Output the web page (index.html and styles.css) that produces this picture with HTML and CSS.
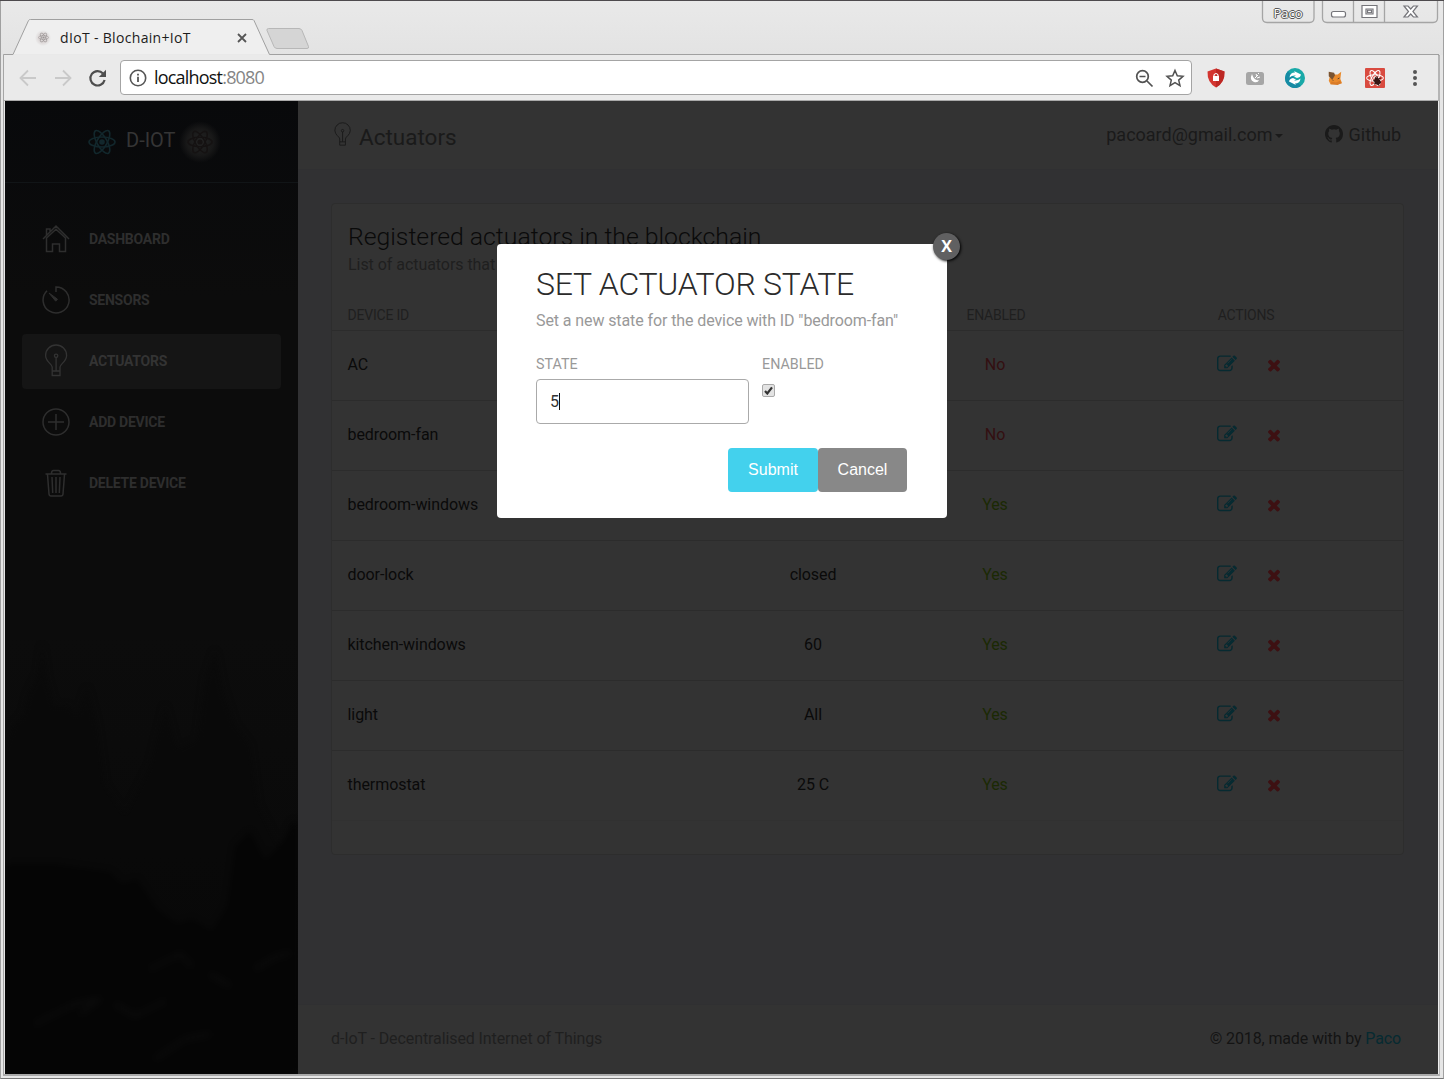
FILE: index.html
```html
<!DOCTYPE html>
<html lang="en">
<head>
<meta charset="utf-8">
<title>dIoT - Blochain+IoT</title>
<link rel="stylesheet" href="styles.css">
</head>
<body>
<svg width="0" height="0" class="defs">
  <symbol id="atom" viewBox="0 0 28 28"><g fill="none" stroke="currentColor" stroke-width="1.6"><ellipse cx="14" cy="14" rx="13" ry="5"/><ellipse cx="14" cy="14" rx="13" ry="5" transform="rotate(60 14 14)"/><ellipse cx="14" cy="14" rx="13" ry="5" transform="rotate(120 14 14)"/></g><circle cx="14" cy="14" r="2.8" fill="currentColor"/></symbol>
  <symbol id="bulb" viewBox="0 0 28 34"><g fill="none" stroke="currentColor" stroke-width="1.3"><path d="M10.2 27v-4c0-3-6.600-5.300-6.600-11.500a10.500 10.500 0 0 1 21 0c0 6.200-6.600 8.500-6.600 11.500v4zM10.200 27v4.500h7.800V27M14.100 13.500V27"/><circle cx="14.100" cy="11.800" r="1.700"/></g></symbol>
  <symbol id="edit" viewBox="0 0 1792 1792"><path fill="currentColor" d="M888 1184l116-116-152-152-116 116v56h96v96h56zm440-720q-16-16-33 1l-350 350q-17 17-1 33t33-1l350-350q17-17 1-33zm80 594v190q0 119-84.500 203.500t-203.500 84.500h-832q-119 0-203.500-84.500t-84.500-203.500v-832q0-119 84.500-203.500t203.500-84.500h832q63 0 117 25 15 7 18 23 3 17-9 29l-49 49q-14 14-32 8-23-6-45-6h-832q-66 0-113 47t-47 113v832q0 66 47 113t113 47h832q66 0 113-47t47-113v-126q0-13 9-22l64-64q15-15 35-7t20 29zm-96-738l288 288-672 672h-288v-288zm444 132l-92 92-288-288 92-92q28-28 68-28t68 28l152 152q28 28 28 68t-28 68z"/></symbol>
  <symbol id="times" viewBox="0 0 1792 1792"><path fill="currentColor" d="M1490 1322q0 40-28 68l-136 136q-28 28-68 28t-68-28l-294-294-294 294q-28 28-68 28t-68-28l-136-136q-28-28-28-68t28-68l294-294-294-294q-28-28-28-68t28-68l136-136q28-28 68-28t68 28l294 294 294-294q28-28 68-28t68 28l136 136q28 28 28 68t-28 68l-294 294 294 294q28 28 28 68z"/></symbol>
</svg>
<div class="window">
  <div class="titlebar">
    <svg class="tab-shape" width="1444" height="55" viewBox="0 0 1444 55">
      <path d="M13 54.500 28.500 20.500Q29 19.500 30.500 19.500H252Q253.500 19.500 254 20.500L269 54.500" fill="#efefef"/>
      <path d="M3.500 55v-.5H13L28.500 20.500Q29 19.500 30.500 19.500H252Q253.500 19.500 254 20.500L269.500 54.500H1439" fill="none" stroke="#a0a0a0"/>
      <path d="M268.500 28.500H299q2 0 3 2l6.500 16q.5 2-1.500 2H277q-2 0-3-2l-7-16q-.5-2 1.500-2z" fill="#d5d5d5" stroke="#b7b7b7"/>
      <path d="M1262.500 1v17q0 4.500 4.500 4.500h42.500q4.500 0 4.500-4.500V1M1322.500 1v17q0 4.500 4.500 4.500h106q4.500 0 4.500-4.500V1M1353.500 1v21M1384.500 1v21" fill="none" stroke="#a5a5a5" stroke-width="1.300"/>
      <g fill="#fff" stroke="#75757a" stroke-width="1.200"><rect x="1331.500" y="11.500" width="14" height="5.500" rx="2"/><path d="M1362 5.500h15v12h-15zM1366 9h7v5h-7z"/><rect x="1367.500" y="10.200" width="4" height="2.500"/><path d="M1404 6h4l2.700 3 2.700-3h4l-4.500 5.500 4.500 5.500h-4l-2.700-3-2.700 3h-4l4.500-5.500z"/></g>
    </svg>
    <div class="tab"><span class="favicon"><svg width="11" height="11"><use href="#atom"/></svg></span><span class="tab-title">dIoT - Blochain+IoT</span><svg width="10" height="10" viewBox="0 0 10 10"><path d="m1 1 8 8M9 1 1 9" stroke="#555" stroke-width="1.800"/></svg></div>
    <span class="profile">Paco</span>
  </div>
  <div class="toolbar">
    <svg class="nav-icons" width="90" height="20" viewBox="0 0 90 20"><g fill="none" stroke="#c9c9c9" stroke-width="1.800"><path d="M17 10H2M9 2.500 1.500 10 9 17.500M36 10h15M44 2.500l7.500 7.500-7.500 7.500"/></g><path d="M84 5.500A7.200 7.200 0 1 0 85.600 12" fill="none" stroke="#4e4e4e" stroke-width="2.200"/><path d="M87 1.800V9h-7.200z" fill="#4e4e4e"/></svg>
    <div class="address">
      <svg width="18" height="18" viewBox="0 0 18 18"><circle cx="9" cy="9" r="7.700" fill="none" stroke="#555" stroke-width="1.600"/><path d="M9 7.800v5.200M9 4.700v1.800" stroke="#555" stroke-width="1.800"/></svg>
      <span class="url">localhost<span>:8080</span></span>
      <svg width="50" height="20" viewBox="0 0 50 20"><g fill="none" stroke="#515151" stroke-width="1.700"><circle cx="7.500" cy="8.500" r="5.800"/><path d="m12 13 5.500 5.500M4.500 8.500h6"/><path d="m40 2.500 2.300 5.300 5.700.5-4.300 3.800 1.300 5.600-5-3-5 3 1.300-5.600L32 8.300l5.700-.5z" stroke-width="1.500"/></g></svg>
    </div>
    <div class="extensions">
      <svg width="18" height="20" viewBox="0 0 18 20"><path d="m9 .5 8.500 3q.5 11-8.500 16Q0 14.500.5 3.500z" fill="#d33530"/><path d="m9 .5 8.500 3q.5 11-8.500 16z" fill="#bd2824"/><rect x="6" y="8" width="6" height="5" fill="#fff"/><path d="M7 8V7q2-3 4 0v1" fill="none" stroke="#fff" stroke-width="1.200"/></svg>
      <svg width="20" height="20" viewBox="0 0 20 20"><rect x="1" y="4" width="18" height="13" rx="2.500" fill="#a6a6a6"/><path d="M7 6q-3 6 2 8 4 1 5-2-5 1-7-6z" fill="#fff"/><path d="m10 10 3-3M11 6l1 2M12 10l3-1M13 6l1-1" stroke="#fff" fill="none"/></svg>
      <svg width="20" height="20" viewBox="0 0 20 20"><circle cx="10" cy="10" r="10" fill="#19a9a8"/><path d="M0 10a10 10 0 0 0 16 8L3 3Q0 6 0 10z" fill="#168ba4"/><path d="M4.500 9.500Q5 4.500 10 4.500l-1-1.500 7 3.500q-.5 3-4 3.500l-3-1.500 2-1Q7 7 4.500 9.500zM15.500 10.500q-.5 5-5.500 5l1 1.500-7-3.500q.5-3 4-3.500l3 1.500-2 1q4 .5 6.500-2z" fill="#fff"/></svg>
      <svg width="16" height="16" viewBox="0 0 18 18"><path d="m2 3 6 2h4l4-3-1 8 2 5-5 1H4l-2-4 1-4z" fill="#e98a2c"/><path d="m2 2 6 1 1 3-3 5-4-4z" fill="#795331"/><path d="m5 13 5 1 5-2 1 3-4 2-8-1z" fill="#d97b27"/><path d="m12 10 2-1M7 12l-1-1" stroke="#4b3b2e"/></svg>
      <svg width="20" height="20" viewBox="0 0 20 20"><rect width="20" height="20" rx="1" fill="#d94b40"/><g color="#fff"><use href="#atom" x="1" y="1" width="18" height="18"/></g><path d="m10 9 3 1 2 2 1 3-3 2-3-1-1-3z" fill="#351613"/><path d="m8 13 8-3M9 16l7-2M12 8l2 10" stroke="#351613"/></svg>
      <svg width="6" height="18" viewBox="0 0 6 18"><g fill="#555"><circle cx="3" cy="3" r="2"/><circle cx="3" cy="9" r="2"/><circle cx="3" cy="15" r="2"/></g></svg>
    </div>
  </div>
  <div class="app">
    <aside class="sidebar">
      <svg class="forest" width="293" height="450" viewBox="0 0 293 450" preserveAspectRatio="none">
        <path class="far" d="M0 125 8 102l10-12 5-20 10-20 4-30 5 35 8 28 12-2 10 10 10-28 10 38 8 60 20 30 25-50 15-60 12 45 20-10 8-60 10-30 8 40 12 35 15 20 8 60 20 40v240H0z"/>
        <path class="near" d="M0 240l50 0 35 5 20 3 12 12 15-5 20 30 20 15 15-5 20 12 15-25 8-60 15-15 15 30 18-20 10-20 25 15v258H0z"/>
        <path class="rocks" d="m30 400 40-20 25-5-20 15M145 345l30-15 12 12M205 350l20 12M250 345l20-12 15-4M110 380l20 12 30-15M150 435l30-20 25-5"/>
      </svg>
      <div class="brand"><svg class="logo" width="28" height="28"><use href="#atom"/></svg><span>D-IOT</span><i class="glow"><svg width="26" height="26"><use href="#atom"/></svg></i></div>
      <nav>
        <a><svg width="28" height="34" viewBox="0 0 28 34"><path d="M1 17 14 4l13 13M4.500 16v13.500h6V22h7v7.500h6V16L14 7.200zM4.500 13V7H8v3" fill="none" stroke="currentColor" stroke-width="1.500"/></svg>DASHBOARD</a>
        <a><svg width="28" height="34" viewBox="0 0 28 34"><path d="M14 9V4A13 13 0 1 1 5 7.700" fill="none" stroke="currentColor" stroke-width="1.500"/><path d="m7 10 8.500 6.200-1.800 2z" fill="currentColor" stroke="currentColor"/></svg>SENSORS</a>
        <a class="active"><svg width="28" height="34"><use href="#bulb"/></svg>ACTUATORS</a>
        <a><svg width="28" height="34" viewBox="0 0 28 34"><g fill="none" stroke="currentColor" stroke-width="1.500"><circle cx="14" cy="17" r="13"/><path d="M6 17h16M14 9v16"/></g></svg>ADD DEVICE</a>
        <a><svg width="28" height="34" viewBox="0 0 28 34"><path d="M3.500 8h21M5.500 8.500l1.500 19.500q.2 2 2 2h10q1.800 0 2-2l1.500-19.500M9.500 7.500q0-3 2-3h5q2 0 2 3M10 11l.7 16M14 11v16M18 11l-.7 16" fill="none" stroke="currentColor" stroke-width="1.500"/></svg>DELETE DEVICE</a>
      </nav>
    </aside>
    <main>
      <header>
        <svg width="21" height="25" viewBox="0 0 28 34"><use href="#bulb"/></svg><h1>Actuators</h1>
        <span class="account">pacoard@gmail.com</span><i class="caret"></i>
        <svg class="github" width="18" height="18" viewBox="0 0 16 16"><path fill="currentColor" d="M8 0C3.580 0 0 3.580 0 8c0 3.540 2.290 6.530 5.470 7.590.4.070.55-.17.55-.38 0-.19-.01-.82-.01-1.490-2.010.37-2.530-.49-2.690-.94-.09-.23-.48-.94-.82-1.130-.28-.15-.68-.52-.01-.53.63-.01 1.080.58 1.230.82.72 1.210 1.870.87 2.330.66.07-.52.28-.87.51-1.070-1.780-.2-3.640-.89-3.640-3.950 0-.87.31-1.590.82-2.150-.08-.2-.36-1.020.08-2.120 0 0 .67-.21 2.200.82a7.600 7.600 0 0 1 4 0c1.530-1.040 2.200-.82 2.200-.82.44 1.100.16 1.920.08 2.120.51.56.82 1.270.82 2.150 0 3.070-1.870 3.750-3.650 3.950.29.25.54.73.54 1.480 0 1.070-.01 1.930-.01 2.200 0 .21.15.46.55.38A8 8 0 0 0 16 8c0-4.420-3.580-8-8-8z"/></svg><span class="gh">Github</span>
      </header>
      <section class="content">
        <div class="card">
          <h2>Registered actuators in the blockchain</h2>
          <p>List of actuators that</p>
          <div class="row head"><span>DEVICE ID</span><span></span><span>ENABLED</span><span>ACTIONS</span></div>
          <div class="row"><span>AC</span><span></span><span class="no">No</span><span class="actions"><svg class="edit"><use href="#edit"/></svg><svg class="del"><use href="#times"/></svg></span></div>
          <div class="row"><span>bedroom-fan</span><span></span><span class="no">No</span><span class="actions"><svg class="edit"><use href="#edit"/></svg><svg class="del"><use href="#times"/></svg></span></div>
          <div class="row"><span>bedroom-windows</span><span></span><span class="yes">Yes</span><span class="actions"><svg class="edit"><use href="#edit"/></svg><svg class="del"><use href="#times"/></svg></span></div>
          <div class="row"><span>door-lock</span><span>closed</span><span class="yes">Yes</span><span class="actions"><svg class="edit"><use href="#edit"/></svg><svg class="del"><use href="#times"/></svg></span></div>
          <div class="row"><span>kitchen-windows</span><span>60</span><span class="yes">Yes</span><span class="actions"><svg class="edit"><use href="#edit"/></svg><svg class="del"><use href="#times"/></svg></span></div>
          <div class="row"><span>light</span><span>All</span><span class="yes">Yes</span><span class="actions"><svg class="edit"><use href="#edit"/></svg><svg class="del"><use href="#times"/></svg></span></div>
          <div class="row"><span>thermostat</span><span>25 C</span><span class="yes">Yes</span><span class="actions"><svg class="edit"><use href="#edit"/></svg><svg class="del"><use href="#times"/></svg></span></div>
        </div>
      </section>
      <footer><span>d-IoT - Decentralised Internet of Things</span><span class="copy">© 2018, made with by <b>Paco</b></span></footer>
    </main>
  </div>
  <div class="modal">
    <span class="close">X</span>
    <h3>SET ACTUATOR STATE</h3>
    <p>Set a new state for the device with ID "bedroom-fan"</p>
    <div class="fields">
      <div class="field"><label>STATE</label><div class="input">5<i></i></div></div>
      <div class="field narrow"><label>ENABLED</label><div class="check"><svg width="9" height="9" viewBox="0 0 9 9"><path d="m1 5 2.300 2.500L8 1.300" fill="none" stroke="#333" stroke-width="2.200"/></svg></div></div>
    </div>
    <div class="buttons"><span class="submit">Submit</span><span class="cancel">Cancel</span></div>
  </div>
</div>
</body>
</html>
```
FILE: styles.css
```css
* { box-sizing: border-box; }
body { margin: 0; font-family: Roboto, sans-serif; font-size: 16px; overflow: hidden; }
h1, h2, h3, p { margin: 0; font-weight: 400; white-space: nowrap; }
svg { display: block; flex: none; }
.defs { position: absolute; }
.window { position: relative; width: 1444px; height: 1079px; background: #e6e6e6; display: flex; flex-direction: column; border-top: 1px solid #4d4a4d; }
.window::before { content: ""; position: absolute; inset: 54px 4px 3px 3px; border: 1px solid #a5a5a5; border-right: 2px solid #b5b5b5; border-bottom: 2px solid #aaa; pointer-events: none; }
.window::after { content: ""; position: absolute; inset: 0; border: 1px solid #a0a0a0; border-top: 0; border-bottom-color: #777; pointer-events: none; }
.titlebar { position: relative; height: 54px; background: linear-gradient(#e9e9e9, #e3e3e3); display: flex; justify-content: space-between; }
.tab-shape { position: absolute; left: 0; top: -1px; }
.tab { position: relative; display: flex; align-items: center; margin: 19px 0 0 35px; height: 35px; width: 212px; }
.favicon { width: 16px; height: 16px; border-radius: 50%; background: radial-gradient(circle, #ddd8d8 40%, #efefef 72%); color: #9a9494; display: grid; place-items: center; }
.tab-title { flex: 1; margin-left: 9px; font: 14px "Open Sans", sans-serif; letter-spacing: .33px; color: #1c1c1c; white-space: nowrap; }
.profile { position: relative; width: 52px; margin: 3px 130px 0 0; text-align: center; font: 13px "Open Sans", sans-serif; color: #fff; text-shadow: 1px 0 #555, -1px 0 #555, 0 1px #555, 0 -1px #555; }
.toolbar { height: 46px; margin: 0 6px 0 4px; background: #eaeaea; border-bottom: 1px solid #aaa; display: flex; align-items: center; position: relative; }
.nav-icons { margin-left: 15px; }
.address { width: 1072px; height: 35px; margin: 0 0 0 11px; background: #fff; border: 1px solid #a4a4a4; border-radius: 4px; display: flex; align-items: center; padding: 0 6px 0 8px; }
.url { flex: 1; margin: -2px 0 0 7px; font: 18px "Open Sans", sans-serif; letter-spacing: -.8px; color: #111; }
.url span { color: #858585; }
.extensions { flex: 1; display: flex; align-items: center; justify-content: space-between; padding: 0 20px 0 15px; }
.extensions svg:nth-child(2) { margin-right: 1px; }
.extensions svg:nth-child(4) { margin: 0 3px 0 2px; }
.extensions svg:nth-child(5) { margin-right: 7px; }
.app { position: relative; height: 973px; margin: 0 5px 0 5px; display: flex; border-right: 1px solid #eee; background: #323234; }
.sidebar { position: relative; flex: none; width: 293px; background: linear-gradient(#08090b, #0c0c0c 20%, #0c0c0c 55%, #080808); color: #2e2e2e; }
.forest { position: absolute; left: 0; bottom: 0; filter: blur(3px); clip-path: inset(0); fill: none; }
.far { fill: #080808; opacity: .6; }
.near { fill: #050505; }
.rocks { stroke: #0a0a0a; stroke-width: 5; }
.brand { position: relative; height: 82px; border-bottom: 1px solid #111517; display: flex; align-items: center; padding: 0 0 3px 83px; font-size: 20px; color: #353535; }
.logo { color: #12272c; margin: 3px 10px 0 0; }
.glow { width: 42px; height: 42px; margin: 3px 0 0 3px; border-radius: 50%; background: radial-gradient(circle, #222 10%, #181818 45%, transparent 70%); color: #151212; display: grid; place-items: center; }
nav { position: relative; padding: 29px 17px; display: flex; flex-direction: column; gap: 6px; }
nav a { height: 55px; display: flex; align-items: center; gap: 19px; padding: 0 0 2px 20px; border-radius: 4px; font-size: 14px; font-weight: 700; letter-spacing: -.25px; }
nav .active { background: #151515; color: #333; }
main { flex: 1; display: flex; flex-direction: column; background: #313133; }
header { height: 69px; background: #333; border-bottom: 1px solid #303032; display: flex; align-items: center; padding: 0 37px 2px 34px; color: #1a1a1a; font-size: 18px; }
h1 { flex: 1; font-size: 22.500px; margin: 6px 0 0 6px; }
.caret { border: 4px solid transparent; border-top-color: #1a1a1a; border-bottom: 0; margin: 3px 42px 0 2px; }
.github { margin-right: 6px; }
.content { flex: 1; padding: 33px 34px 0 33px; }
.card { height: 652px; background: #333; border: 1px solid #2d2d2d; border-radius: 4px; padding-top: 17px; color: #0a0a0a; }
h2 { padding-left: 16px; font-size: 24.800px; font-weight: 300; line-height: 32px; letter-spacing: -.02px; }
.card p { padding-left: 16px; line-height: 24px; color: #1f1f1f; letter-spacing: -.05px; }
.row { height: 70px; display: grid; grid-template-columns: 391px 180px 184px 316px; align-items: center; border-bottom: 1px solid #2c2c2c; padding-bottom: 3px; letter-spacing: -.07px; }
.row:last-child { border-color: #313131; }
.row > span { text-align: center; }
.row > span:first-child { text-align: left; padding-left: 15.500px; }
.row.head { height: 54px; padding: 22px 0 0; font-size: 14px; color: #1f1f1f; letter-spacing: -.2px; }
.row.head > span:nth-child(n+3) { padding-left: 2px; }
.row > .no { color: #330f11; }
.row > .yes { color: #1b2904; }
.row > .actions { display: flex; align-items: center; justify-content: center; padding-left: 7px; }
.edit { width: 20px; height: 20px; color: #062a31; margin-right: 28px; }
.del { width: 18px; height: 18px; color: #3d1012; margin-right: -2px; margin-top: 2px; }
footer { height: 70px; background: #333; border-top: 1px solid #303032; display: flex; align-items: center; justify-content: space-between; padding: 0 37px 2px 33px; color: #1f1f1f; letter-spacing: -.1px; }
.copy { color: #141414; letter-spacing: -.13px; }
.copy b { font-weight: 400; color: #062a31; }
.modal { position: absolute; left: 497px; top: 243px; width: 450px; height: 274px; background: #fff; border-radius: 4px; padding: 19px 40px 0 39px; }
h3 { font-size: 32px; letter-spacing: -.24px; font-weight: 300; line-height: 43px; color: #2b2b2b; }
.modal p { line-height: 24px; margin-top: 3px; color: #999; letter-spacing: -.1px; }
.fields { display: flex; gap: 13px; margin-top: 21px; }
.field { flex: none; width: 213px; }
.narrow { width: 100px; }
label { display: block; font: 14.300px/20px Roboto, sans-serif; color: #999; }
.input { height: 45px; margin-top: 5px; border: 1px solid #aaa; border-radius: 4px; padding-left: 13px; display: flex; align-items: center; color: #333; }
.input i { width: 1px; height: 17px; background: #111; }
.check { width: 13px; height: 13px; margin-top: 10px; border: 1px solid #aaa; border-radius: 2px; background: #e3e3e3; display: grid; place-items: center; }
.buttons { display: flex; justify-content: flex-end; margin-top: 24px; font-family: "Liberation Sans", sans-serif; color: #fff; }
.buttons span { width: 90px; height: 44px; line-height: 43px; text-align: center; border-radius: 4px; background: #43d1ed; }
.buttons .cancel { width: 89px; background: #888; }
.close { position: absolute; left: 436px; top: -11px; width: 27px; height: 27px; border-radius: 50%; background: #606061; color: #fff; font: 700 16px/26px "Open Sans", sans-serif; text-align: center; box-shadow: 1px 1px 3px #000; }
```
